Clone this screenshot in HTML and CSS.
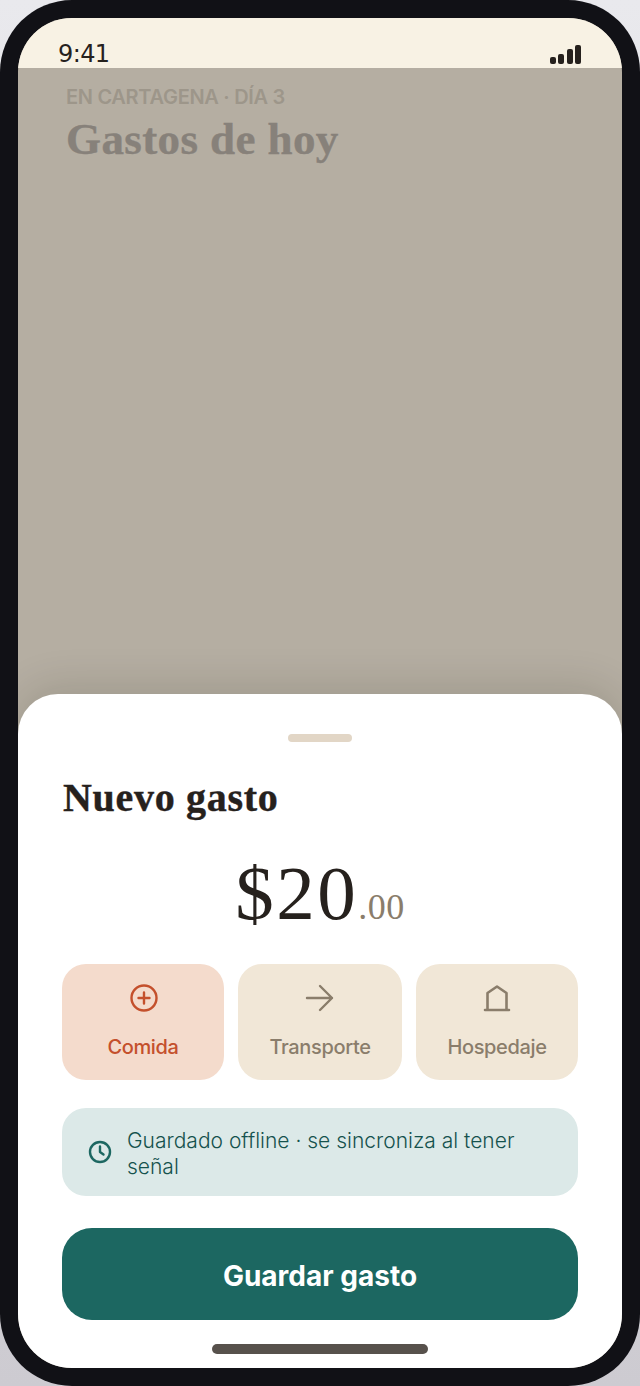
FILE: index.html
```html
<!DOCTYPE html>
<html lang="es">
<head>
  <meta charset="UTF-8" />
  <meta name="viewport" content="width=device-width, initial-scale=1.0"/>
  <title>Nuevo gasto</title>
  <link rel="stylesheet" href="styles.css">
</head>
<body>
  <div class="phone">
    <div class="screen">
      <div class="status">
        <span class="time">9:41</span>
        <div class="signal">
          <i class="bar b1"></i>
          <i class="bar b2"></i>
          <i class="bar b3"></i>
          <i class="bar b4"></i>
        </div>
      </div>

      <div class="behind">
        <p class="trip">EN CARTAGENA · DÍA 3</p>
        <h1>Gastos de hoy</h1>
      </div>

      <div class="sheet">
        <div class="handle"></div>
        <h2>Nuevo gasto</h2>
        <div class="amount">$20<span class="cents">.00</span></div>

        <div class="chips">
          <div class="chip active">
            <svg width="32" height="32" viewBox="0 0 32 32" fill="none" stroke="currentColor" stroke-width="2.4" stroke-linecap="round" stroke-linejoin="round">
              <circle cx="17" cy="16" r="12.500"/>
              <path d="M17 10.500v11M11.500 16h11"/>
            </svg>
            <span>Comida</span>
          </div>
          <div class="chip">
            <svg width="32" height="32" viewBox="0 0 32 32" fill="none" stroke="currentColor" stroke-width="2.4" stroke-linecap="round" stroke-linejoin="round">
              <path d="M3 16h25M16 4l12 12-12 12"/>
            </svg>
            <span>Transporte</span>
          </div>
          <div class="chip">
            <svg width="32" height="32" viewBox="0 0 32 32" fill="none" stroke="currentColor" stroke-width="2.6" stroke-linecap="round" stroke-linejoin="round">
              <path d="M4 28h24M6.500 28V11L16 4.500 25.500 11v17"/>
            </svg>
            <span>Hospedaje</span>
          </div>
        </div>

        <div class="notice">
          <svg width="24" height="24" viewBox="0 0 24 24" fill="none" stroke="currentColor" stroke-width="2.4" stroke-linecap="round" stroke-linejoin="round">
            <circle cx="12" cy="12" r="10"/>
            <path d="M12 6.500V12l3.500 2.500"/>
          </svg>
          <p>Guardado offline · se sincroniza al tener señal</p>
        </div>

        <button class="save">Guardar gasto</button>
        <div class="home"></div>
      </div>
    </div>
  </div>
</body>
</html>
```

FILE: styles.css
```css
:root {
  --ink: #26211d;
  --muted: #8a7d6b;
  --sand: #f1e7d7;
  --teal: #1c6761;
  --rust: #c4502c;
}

* {
  box-sizing: border-box;
  margin: 0;
  padding: 0;
}

html, body {
  height: 100%;
}

body {
  background: linear-gradient(to bottom, #e9e9ed, #cdcbd1);
  font-family: Inter, "Noto Sans", sans-serif;
  color: var(--ink);
}

.phone {
  width: 640px;
  height: 1386px;
  padding: 18px;
  background: #111116;
  border-radius: 72px;
}

.screen {
  height: 100%;
  display: flex;
  flex-direction: column;
  background: #b5aea2;
  border-radius: 54px;
  overflow: hidden;
}

.status {
  height: 50px;
  flex: none;
  display: flex;
  align-items: flex-end;
  justify-content: space-between;
  padding: 0 41px 2px 40px;
  background: #f8f2e4;
}

.time {
  margin-bottom: -3px;
  font-family: "DejaVu Sans", sans-serif;
  font-size: 24px;
  line-height: 30px;
  letter-spacing: -0.6px;
}

.signal {
  display: flex;
  align-items: flex-end;
  gap: 2.33px;
  margin-bottom: 2px;
}

.bar {
  width: 6px;
  background: var(--ink);
  border-radius: 2px;
}

.b1 { height: 7px; }
.b2 { height: 10px; }
.b3 { height: 15px; }
.b4 { height: 19px; }

.behind {
  flex: 1;
  padding: 16px 48px 0;
}

.trip {
  font-size: 20px;
  line-height: 26px;
  font-weight: 600;
  letter-spacing: -0.3px;
  color: #9d968a;
}

h1 {
  margin-top: 4px;
  font-family: "Liberation Serif", serif;
  font-size: 45px;
  line-height: 50px;
  font-weight: 700;
  letter-spacing: 0.4px;
  -webkit-text-stroke: 0.4px #87817a;
  color: #87817a;
}

.sheet {
  height: 674px;
  flex: none;
  display: flex;
  flex-direction: column;
  padding: 40px 44px 14px;
  background: #fff;
  border-radius: 40px 40px 0 0;
  box-shadow: 0 -8px 40px rgba(30, 25, 15, 0.14);
}

.handle {
  width: 64px;
  height: 8px;
  flex: none;
  align-self: center;
  background: #e2d6c6;
  border-radius: 4px;
}

h2 {
  margin-top: 32px;
  padding-left: 1px;
  font-family: "Liberation Serif", serif;
  font-size: 40px;
  line-height: 48px;
  font-weight: 700;
  letter-spacing: 0.7px;
  -webkit-text-stroke: 0.4px var(--ink);
}

.amount {
  margin-top: 31px;
  height: 87px;
  text-align: center;
  font-family: "Liberation Serif", serif;
  font-size: 77px;
  line-height: 80px;
  letter-spacing: 2.5px;
}

.cents {
  font-size: 36px;
  letter-spacing: 0.5px;
  color: var(--muted);
}

.chips {
  display: grid;
  grid-template-columns: 162px 164px 162px;
  gap: 14px;
  margin-top: 24px;
}

.chip {
  height: 116px;
  display: flex;
  flex-direction: column;
  align-items: center;
  padding-top: 18px;
  gap: 20px;
  background: var(--sand);
  color: var(--muted);
  border-radius: 24px;
  font-size: 20px;
  line-height: 26px;
  font-weight: 500;
  letter-spacing: -0.35px;
}

.chip.active {
  background: #f4dbcc;
  color: var(--rust);
}

.notice {
  display: flex;
  align-items: center;
  gap: 15px;
  height: 88px;
  margin-top: 28px;
  padding: 0 40px 0 26px;
  background: #dce9e8;
  color: #15524d;
  border-radius: 24px;
  font-size: 21px;
  line-height: 26px;
  font-weight: 300;
}

.notice p {
  padding-top: 4px;
}

.notice svg {
  flex: none;
  color: var(--teal);
}

.save {
  height: 92px;
  flex: none;
  margin-top: 32px;
  padding-top: 3px;
  border: none;
  background: var(--teal);
  color: #fff;
  border-radius: 30px;
  font-family: inherit;
  font-size: 28px;
  font-weight: 700;
}

.home {
  width: 216px;
  height: 10px;
  flex: none;
  align-self: center;
  margin-top: 24px;
  background: #57514c;
  border-radius: 5px;
}
```
